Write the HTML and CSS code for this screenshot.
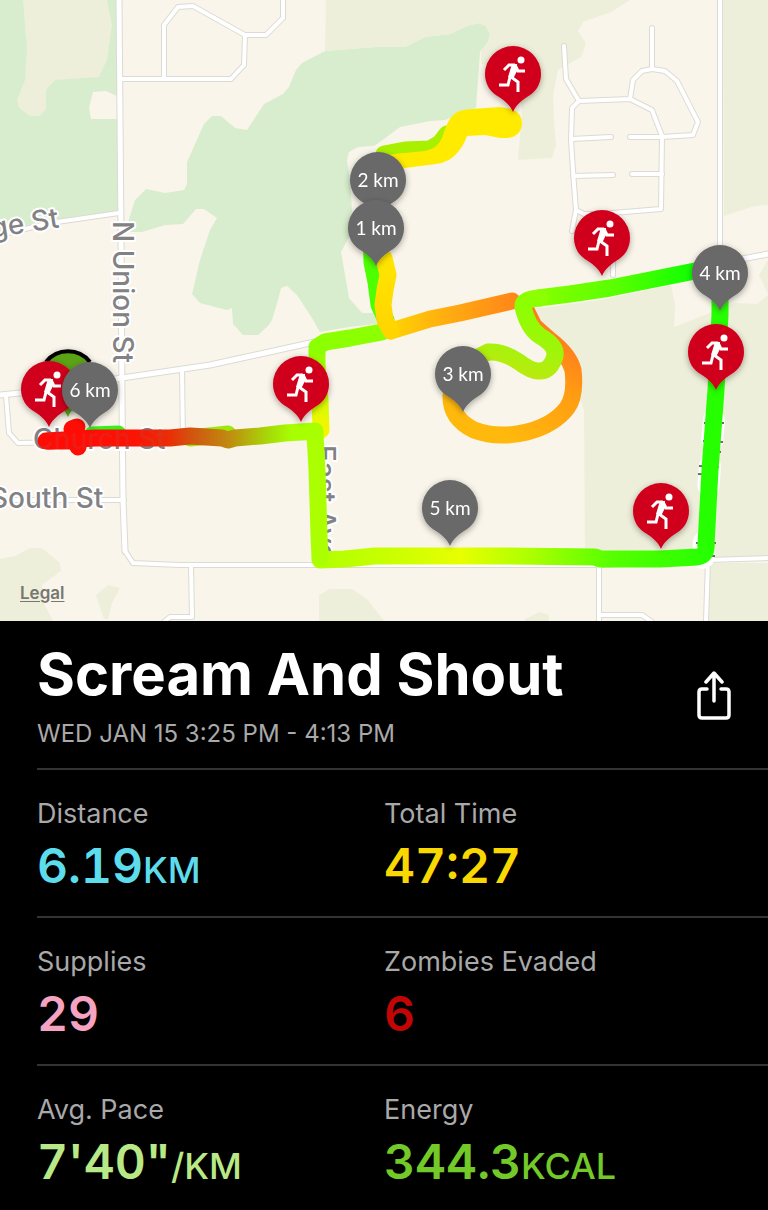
FILE: index.html
```html
<!DOCTYPE html>
<html lang="en">
<head>
<meta charset="utf-8">
<meta name="viewport" content="width=device-width, initial-scale=1">
<title>Scream And Shout</title>
<link rel="stylesheet" href="styles.css">
</head>
<body>
<main class="run">
  <section class="map" aria-label="Route map">
    <svg class="map-canvas" viewBox="0 0 768 621" role="img" aria-label="Map of the run">
      <defs>
        <filter id="shadow" x="-30%" y="-30%" width="160%" height="160%"><feDropShadow dx="0" dy="2" stdDeviation="3" flood-color="#000" flood-opacity=".35"/></filter>
        <linearGradient id="g-south" gradientUnits="userSpaceOnUse" x1="320" y1="0" x2="710" y2="0">
          <stop offset="0" stop-color="#b2ff00"/><stop offset=".2" stop-color="#ccff00"/><stop offset=".36" stop-color="#e8ff00"/><stop offset=".55" stop-color="#a8ff00"/><stop offset=".75" stop-color="#55ff00"/><stop offset="1" stop-color="#26ff00"/>
        </linearGradient>
        <linearGradient id="g-church" gradientUnits="userSpaceOnUse" x1="90" y1="0" x2="315" y2="0">
          <stop offset="0" stop-color="#ff0d05"/><stop offset=".2" stop-color="#fb1404"/><stop offset=".34" stop-color="#ec2a06"/><stop offset=".47" stop-color="#cf5a10"/><stop offset=".62" stop-color="#c08c10"/><stop offset=".8" stop-color="#a6dc08"/><stop offset=".9" stop-color="#a8ff00"/>
        </linearGradient>
        <linearGradient id="g-east" gradientUnits="userSpaceOnUse" x1="530" y1="0" x2="695" y2="0">
          <stop offset="0" stop-color="#8cff00"/><stop offset=".55" stop-color="#55ff00"/><stop offset="1" stop-color="#0dff00"/>
        </linearGradient>
        <linearGradient id="g-curl" gradientUnits="userSpaceOnUse" x1="524" y1="305" x2="505" y2="375">
          <stop offset="0" stop-color="#8cff00"/><stop offset=".5" stop-color="#a0f50a"/><stop offset="1" stop-color="#bde810"/>
        </linearGradient>
        <linearGradient id="g-orange" gradientUnits="userSpaceOnUse" x1="390" y1="0" x2="518" y2="0">
          <stop offset="0" stop-color="#ffd400"/><stop offset=".4" stop-color="#ffb010"/><stop offset="1" stop-color="#ff8418"/>
        </linearGradient>
        <linearGradient id="g-loop" gradientUnits="userSpaceOnUse" x1="555" y1="325" x2="490" y2="425">
          <stop offset="0" stop-color="#ff7a1e"/><stop offset=".4" stop-color="#ff9c12"/><stop offset="1" stop-color="#ffb80c"/>
        </linearGradient>
        <linearGradient id="g-yellow" gradientUnits="userSpaceOnUse" x1="0" y1="255" x2="0" y2="335">
          <stop offset="0" stop-color="#ffe600"/><stop offset="1" stop-color="#ffd400"/>
        </linearGradient>
        <linearGradient id="g-west" gradientUnits="userSpaceOnUse" x1="0" y1="350" x2="0" y2="430">
          <stop offset="0" stop-color="#8cff00"/><stop offset=".5" stop-color="#c8ff00"/><stop offset="1" stop-color="#f5f500"/>
        </linearGradient>
        <path id="pin" d="M0 38C-3 31-8 27-14 23C-23 18-28 10-28 0A28 28 0 0 1 28 0C28 10 23 18 14 23C8 27 3 31 0 38Z"/>
        <g id="runner" fill="none" stroke="#fff" stroke-linejoin="miter">
          <circle cx="8" cy="-14" r="3.500" fill="#fff" stroke="none"/>
          <path d="M-9 -4L-4 -9H2" stroke-width="3"/>
          <path d="M2 -9L5 -3H12" stroke-width="3"/>
          <path d="M-1 -10H4L4 -3L0 5L-5 3Z" fill="#fff" stroke="none"/>
          <path d="M-3 3L-5 11H-14M-2 3L5 8V18" stroke-width="3"/>
        </g>
        <g id="run-pin"><use href="#pin" class="pin-red"/><use href="#runner"/></g>
        <g id="roads">
          <path d="M0 235L50 223L119 213M182 371L183 440M6 396L9 433L18 443L320 437M0 500H124"/>
          <path d="M125 551L133 563L180 565H600L708 560L768 558"/>
          <path d="M720 0V300L708 560L706 621"/>
          <path d="M121 79H231L244 65L245 35L193 6L178 7L164 25V79M245 35H266L283 18V0"/>
          <path d="M191 566L192 617H170L164 622M599 565V621M599 615H642L652 622"/>
          <path d="M564 46L566 79L579 101L630 99L633 80L642 71L652 69L665 71L677 81L698 122L693 135L662 137M652 28V69M630 99L652 110L662 136L661 209L600 214H584L576 210"/>
          <path d="M579 101L572 108L571 140L574 185L576 210L572 231M571 139L611 137M630 137H662M573 176L613 175M632 174H662M613 258V275"/>
        </g>
        <g id="main-roads">
          <path d="M0 395L20 393L122 378L210 365L310 343L384 328L768 254"/>
          <path d="M119 0L121 235L122 400L123 500L125 551"/>
        </g>
      </defs>

      <rect width="768" height="621" fill="#f9f5ea"/>
      <g fill="#d8edcd">
        <path d="M0 0H119V213L60 221L0 233Z"/>
        <path d="M325 51L375 47L405 47L425 37L450 34L467 26L478 23L486 26L490 34L488 42L480 52L478 80L476 108L445 120L430 121L400 127L384 139L374 146L358 147L349 152L347 160L350 180L352 210L350 235L341 252L345 275L349 298L362 313H384V323L349 327L320 332L312 318L297 295L287 286L281 288L278 300L272 320L268 326L258 335H243L233 324L232 308L227 310L200 303L192 294L200 260L210 230L217 218L204 209H196L183 224L165 225L142 232H125L135 200L146 189L165 193L184 190L187 184V162L204 124L212 116H221L235 128L247 130L264 104L283 94L289 87L296 70L302 63Z"/>
      </g>
      <g fill="#edefda">
        <path d="M23 0L27 50L25 80L17 100L19 108L30 116H40L46 109V90L55 80L99 77L107 60L112 25L107 0Z"/>
        <path d="M326 0H630L611 12L583 22L578 31L586 43L581 57L558 70L553 95L554 120L556 145L552 158L518 160L520 135L522 110L515 70L481 64V51L488 42L490 34L486 26L478 23L467 26L450 34L425 37L405 47L375 47L325 51Z"/>
        <path d="M723 0H768V205L755 206L724 216Z"/>
        <path d="M519 311L600 300L671 285L675 305L674 327L735 303L757 304L768 295V558H585L584 410L560 340Z"/>
        <path d="M768 260L759 275L768 294ZM710 563H768V621H708Z"/>
        <path d="M0 559L15 556L30 548H42L60 563L61 571L42 585L43 602L53 621H0ZM96 595L108 585L120 588L112 603L108 619H104ZM319 595L330 589H352L368 600L384 621H319ZM525 619L540 612L549 615V621H525Z"/>
      </g>
      <path fill="#f9f5ea" d="M93 92L106 91L119 97V119H91L89 108Z"/>

      <g fill="none" stroke-linejoin="round" stroke-linecap="round">
        <use href="#roads" class="road-edge"/>
        <use href="#main-roads" class="main-edge"/>
        <use href="#roads" class="road-fill"/>
        <use href="#main-roads" class="main-fill"/>
      </g>

      <g class="street">
        <text transform="translate(-8 238) rotate(-9)">ge St</text>
        <text transform="translate(113 221) rotate(90)">N Union St</text>
        <text x="-10" y="508">South St</text>
        <text x="33" y="449">Church St</text>
        <text transform="translate(315 445) rotate(90)">East Ave</text>
      </g>
      <g fill="none">
        <path d="M714 420L708 490M704 542L703 558" stroke="#fff" stroke-width="22" stroke-linecap="round" stroke-dasharray="20 26"/>
        <path d="M704 423H724M703 441L723 442M703 450L721 452M699 466L719 467M698 474L718 475M696 543H716M707 556H715" stroke="#66706a" stroke-width="2"/>
      </g>

      <g class="route">
        <path d="M384 154L405 150L430 149L440 143L447 134" stroke="#a8f000"/>
        <path d="M384 155L425 151Q437 149 442 138Q447 122 452 116Q459 109 472 109L500 107L512 109Q522 113 522 124Q521 136 508 138L500 138L485 135L467 136Q463 147 457 153Q450 162 436 164L405 168L384 170Z" fill="#ffeb00"/>
        <path d="M376 185L371 230L372 262L376 282L379 305L386 320" stroke="#4dff00"/>
        <path d="M382 332L350 338L325 342L317 347L317 365L320 400L321 430" stroke="url(#g-west)"/>
        <path d="M391 331L430 319L460 313L512 301" stroke="url(#g-orange)"/>
        <path d="M384 258L388 275L385 290L383 305L385 320L391 331" stroke="url(#g-yellow)"/>
        <path d="M526 310L534 326L551 341Q569 355 573 370Q576 396 567 408Q554 425 527 432Q498 439 474 430Q450 418 451 395" stroke="url(#g-loop)"/>
        <path d="M695 271L635 283L610 288L570 294L538 298" stroke="url(#g-east)"/>
        <path d="M540 298Q522 299 523 307Q528 328 540 336Q559 347 554 359Q549 372 538 371Q531 371 519 362Q503 351 488 352L474 359" stroke="url(#g-curl)"/>
        <path d="M720 290V315L716 390L710 470L706 545" stroke="#26ff00"/>
        <path d="M706 545Q707 556 697 557L660 559H600L595 557L500 556H430L375 556L345 559L320 560" stroke="url(#g-south)"/>
        <path d="M320 558L319 535L317 470L315 434" stroke="#acff00"/>
        <path d="M92 435L118 434" stroke="#38f01a"/>
        <path d="M190 438L228 434" stroke="#9ce80c"/>
        <path d="M315 431L285 433L260 436L235 438L228 440L222 438L190 436L170 438L130 438L95 438L48 441" stroke="url(#g-church)"/>
        <path d="M46 441H80M72 429L77 427M78 447L74 434" stroke="#ff0d05"/>
      </g>
      <text class="street street-veiled" x="33" y="449">Church St</text>

      <g filter="url(#shadow)">
        <g transform="translate(68 379)"><use href="#pin" fill="#5aa313"/><path d="M-22 -17A28 28 0 0 1 22 -17" fill="none" stroke="#000" stroke-width="4"/></g>
      </g>
      <g filter="url(#shadow)"><use href="#run-pin" transform="translate(49 389)"/></g>
      <g filter="url(#shadow)"><use href="#run-pin" transform="translate(301 384)"/></g>
      <g filter="url(#shadow)"><use href="#run-pin" transform="translate(513 74)"/></g>
      <g filter="url(#shadow)"><use href="#run-pin" transform="translate(602 238)"/></g>
      <g filter="url(#shadow)"><use href="#run-pin" transform="translate(661 511)"/></g>
      <g class="km" filter="url(#shadow)" transform="translate(378 180)"><use href="#pin"/><text y="7">2 km</text></g>
      <g class="km" filter="url(#shadow)" transform="translate(376 228)"><use href="#pin"/><text y="7">1 km</text></g>
      <g class="km" filter="url(#shadow)" transform="translate(463 374)"><use href="#pin"/><text y="7">3 km</text></g>
      <g class="km" filter="url(#shadow)" transform="translate(720 273)"><use href="#pin"/><text y="7">4 km</text></g>
      <g class="km" filter="url(#shadow)" transform="translate(450 508)"><use href="#pin"/><text y="7">5 km</text></g>
      <g class="km" filter="url(#shadow)" transform="translate(90 390)"><use href="#pin"/><text y="7">6 km</text></g>
      <g filter="url(#shadow)"><use href="#run-pin" transform="translate(716 352)"/></g>
    </svg>
    <a class="legal" href="#legal">Legal</a>
  </section>

  <section class="details">
    <header class="heading">
      <div class="heading-text">
        <h1 class="title">Scream And Shout</h1>
        <p class="date">WED JAN 15 3:25 PM - 4:13 PM</p>
      </div>
      <button class="share" type="button" aria-label="Share">
        <svg class="share-icon" viewBox="0 0 36 50" fill="none" stroke="#fff" stroke-width="3.500" stroke-linejoin="round" stroke-linecap="round">
          <path d="M11 18H6Q3 18 3 21V44Q3 47 6 47H30Q33 47 33 44V21Q33 18 30 18H25"/><path d="M18 30V3M10 11L18 2L26 11"/>
        </svg>
      </button>
    </header>
    <dl class="stats">
      <div class="stat"><dt class="label">Distance</dt><dd class="value distance">6.19<span class="unit">KM</span></dd></div>
      <div class="stat"><dt class="label">Total Time</dt><dd class="value time">47:27</dd></div>
      <div class="stat"><dt class="label">Supplies</dt><dd class="value supplies">29</dd></div>
      <div class="stat"><dt class="label">Zombies Evaded</dt><dd class="value zombies">6</dd></div>
      <div class="stat"><dt class="label">Avg. Pace</dt><dd class="value pace">7'40"<span class="unit">/KM</span></dd></div>
      <div class="stat"><dt class="label">Energy</dt><dd class="value energy">344.3<span class="unit">KCAL</span></dd></div>
    </dl>
  </section>
</main>
</body>
</html>
```
FILE: styles.css
```css
* { box-sizing: border-box; }
body { margin: 0; background: #000; color: #fff; font-family: Inter, "Liberation Sans", sans-serif; }
.map { position: relative; }
.map-canvas { display: block; width: 100%; height: auto; }
.road-edge { stroke: #dcdad4; stroke-width: 6px; }
.road-fill { stroke: #fff; stroke-width: 4px; }
.main-edge { stroke: #dcdad4; stroke-width: 7px; }
.main-fill { stroke: #fff; stroke-width: 5px; }
.street { font-family: Inter, sans-serif; font-size: 28px; font-weight: 500; fill: #828285; stroke: #fff; stroke-width: 4px; stroke-linejoin: round; paint-order: stroke; }
.street-veiled { stroke: none; opacity: .12; }
.route { fill: none; stroke-width: 17px; stroke-linecap: round; stroke-linejoin: round; }
.route [fill] { stroke-width: 0; }
.pin-red { fill: #d0021b; }
.km { fill: #696969; }
.km text { fill: #fff; font-family: Lato, sans-serif; font-size: 19px; text-anchor: middle; }
.legal { position: absolute; left: 20px; bottom: 18px; color: #77776f; font-size: 17px; font-weight: 600; line-height: 20px; text-underline-offset: 2px; }
.details { padding-left: 37px; }
.heading { display: flex; align-items: center; justify-content: space-between; padding: 21px 36px 18px 0; }
.title { margin: 0; font-size: 58px; font-weight: 700; line-height: 64px; }
.date { margin: 12px 0 0; color: #a9a9a9; font-size: 24px; line-height: 32px; }
.share { padding: 0; border: 0; background: none; }
.share-icon { display: block; width: 36px; height: 50px; }
.stats { display: grid; grid-template-columns: 347px 1fr; margin: 0; }
.stat { padding: 28px 0 22px; border-top: 2px solid #333; }
.label { color: #a9a9a9; font-size: 27px; line-height: 32px; }
.value { margin: 8px 0 0; font-size: 48px; font-weight: 600; line-height: 56px; font-variant-numeric: tabular-nums; }
.unit { font-size: 36px; font-weight: 500; line-height: 1; }
.distance { color: #5ddcec; }
.time { color: #f8d800; }
.supplies { color: #f5a3c0; }
.zombies { color: #c20606; }
.pace { color: #b8e986; }
.energy { color: #72c928; }
```
